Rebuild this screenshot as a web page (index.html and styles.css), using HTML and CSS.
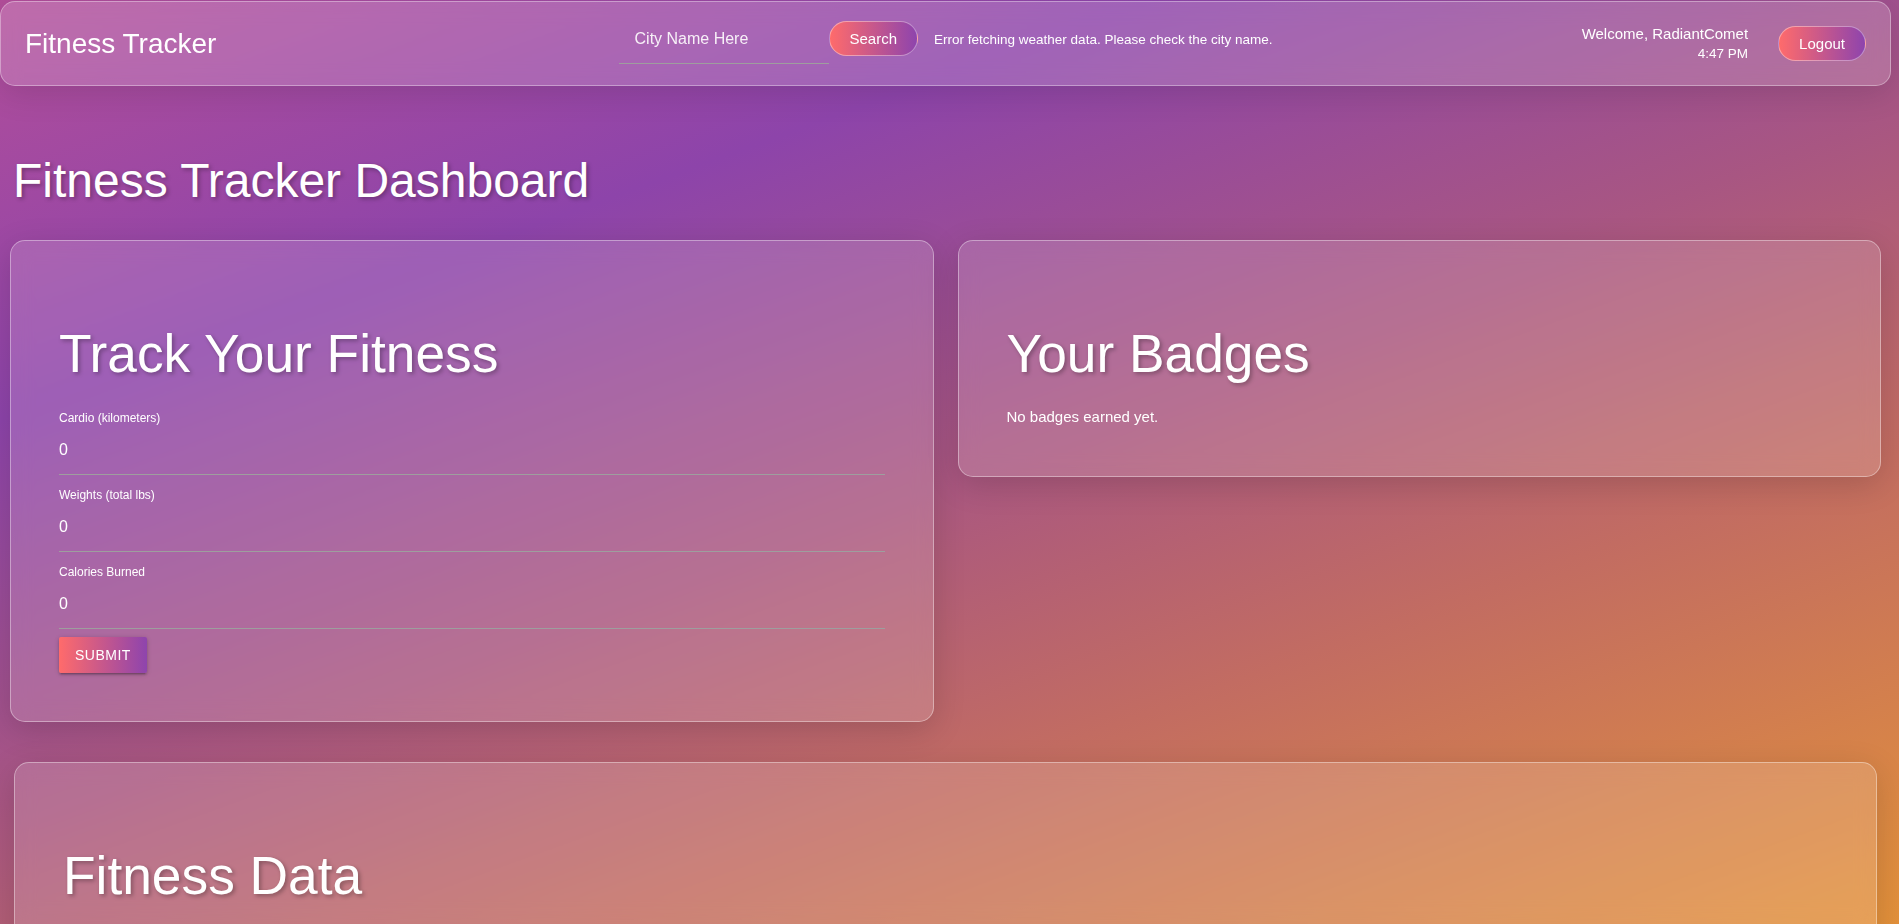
FILE: index.html
```html
<!DOCTYPE html>
<html lang="en">
<head>
<meta charset="utf-8">
<title>Fitness Tracker</title>
<link rel="stylesheet" href="styles.css">
</head>
<body>
<header class="topbar">
  <div class="brand">Fitness Tracker</div>
  <div class="weather">
    <input class="city-input" type="text" placeholder="City Name Here">
    <button class="pill-btn" type="button">Search</button>
    <span class="weather-msg">Error fetching weather data. Please check the city name.</span>
  </div>
  <div class="user">
    <div class="user-info">
      <div class="welcome">Welcome, RadiantComet</div>
      <div class="clock">4:47 PM</div>
    </div>
    <button class="pill-btn" type="button">Logout</button>
  </div>
</header>

<main class="page">
  <h1 class="page-title">Fitness Tracker Dashboard</h1>

  <div class="cards-row">
    <section class="card">
      <h2 class="card-title">Track Your Fitness</h2>
      <form class="track-form">
        <div class="field">
          <label for="cardio">Cardio (kilometers)</label>
          <input id="cardio" type="text" value="0">
        </div>
        <div class="field">
          <label for="weights">Weights (total lbs)</label>
          <input id="weights" type="text" value="0">
        </div>
        <div class="field">
          <label for="calories">Calories Burned</label>
          <input id="calories" type="text" value="0">
        </div>
        <button class="btn-submit" type="button">Submit</button>
      </form>
    </section>

    <section class="card">
      <h2 class="card-title">Your Badges</h2>
      <p class="card-text">No badges earned yet.</p>
    </section>
  </div>

  <section class="card card-wide">
    <h2 class="card-title">Fitness Data</h2>
    <div class="data-area"></div>
  </section>
</main>
</body>
</html>
```

FILE: styles.css
```css
html, body {
  margin: 0;
  padding: 0;
}

body {
  font-family: "Liberation Sans", Arial, sans-serif;
  color: #fff;
  min-height: 100vh;
  background: linear-gradient(160deg, #b24e9a 0%, #8d44aa 26%, #a85682 50%, #c26c62 70%, #e3913a 100%) fixed;
}

/* ---------- header ---------- */
.topbar {
  display: grid;
  grid-template-columns: 1fr auto 1fr;
  align-items: center;
  box-sizing: border-box;
  height: 85px;
  margin: 1px 8px 0 0;
  padding: 0 24px;
  background: rgba(255, 255, 255, 0.17);
  border: 1px solid rgba(255, 255, 255, 0.35);
  border-radius: 15px;
  box-shadow: 0 8px 32px rgba(0, 0, 0, 0.12);
  backdrop-filter: blur(10px);
}

.brand {
  font-size: 28px;
}

.weather {
  display: flex;
  align-items: baseline;
}

.city-input {
  box-sizing: border-box;
  width: 210px;
  height: 49px;
  margin: 0 0 9px 0;
  padding: 0 16px;
  border: 0;
  border-bottom: 1px solid #9e9e9e;
  background: transparent;
  color: #fff;
  font: 16px "Liberation Sans", Arial, sans-serif;
  outline: none;
}

.city-input::placeholder {
  color: #f7f0f7;
  opacity: 1;
}

.pill-btn {
  font: 15px "Liberation Sans", Arial, sans-serif;
  color: #fff;
  padding: 8px 20px;
  border: 1px solid rgba(255, 255, 255, 0.4);
  border-radius: 25px;
  background: linear-gradient(90deg, #ff6b6b, #8e44ad);
  cursor: pointer;
}

.weather-msg {
  margin-left: 16px;
  font-size: 13.5px;
}

.user {
  justify-self: end;
  display: flex;
  align-items: center;
  gap: 30px;
}

.user-info {
  text-align: right;
  line-height: 20px;
}

.welcome {
  font-size: 15px;
}

.clock {
  font-size: 13.5px;
}

/* ---------- page ---------- */
.page {
  padding: 0 18px 40px 10px;
}

.page-title {
  font-size: 48px;
  font-weight: normal;
  line-height: 56px;
  margin: 67px 0 31px 3px;
  text-shadow: 2px 2px 4px rgba(0, 0, 0, 0.3);
}

.cards-row {
  display: grid;
  grid-template-columns: 1fr 1fr;
  gap: 24px;
  align-items: start;
}

.card {
  background: rgba(255, 255, 255, 0.15);
  border: 1px solid rgba(255, 255, 255, 0.38);
  border-radius: 15px;
  padding: 48px;
  box-shadow: 0 8px 32px rgba(0, 0, 0, 0.15);
  backdrop-filter: blur(10px);
}

.card-title {
  font-size: 53.3px;
  font-weight: normal;
  line-height: 60px;
  margin: 35px 0 22px;
  text-shadow: 2px 2px 4px rgba(0, 0, 0, 0.3);
}

.card-text {
  margin: 0;
  font-size: 15px;
  line-height: 22px;
}

.field label {
  display: block;
  padding-top: 5px;
  font-size: 12px;
  line-height: 15px;
}

.field input {
  display: block;
  box-sizing: border-box;
  width: 100%;
  height: 49px;
  margin: 0 0 8px 0;
  padding: 0;
  border: 0;
  border-bottom: 1px solid #9e9e9e;
  background: transparent;
  color: #fff;
  font: 16px "Liberation Sans", Arial, sans-serif;
  outline: none;
}

.btn-submit {
  display: block;
  height: 36px;
  padding: 0 16px;
  border: 0;
  border-radius: 2px;
  background: linear-gradient(90deg, #ff6b6b, #8e44ad);
  color: #fff;
  font: 14px "Liberation Sans", Arial, sans-serif;
  letter-spacing: 0.5px;
  text-transform: uppercase;
  box-shadow: 0 2px 2px 0 rgba(0, 0, 0, 0.14), 0 3px 1px -2px rgba(0, 0, 0, 0.12), 0 1px 5px 0 rgba(0, 0, 0, 0.2);
  cursor: pointer;
}

.card-wide {
  margin: 40px 4px 0;
}

.data-area {
  height: 400px;
}
```
